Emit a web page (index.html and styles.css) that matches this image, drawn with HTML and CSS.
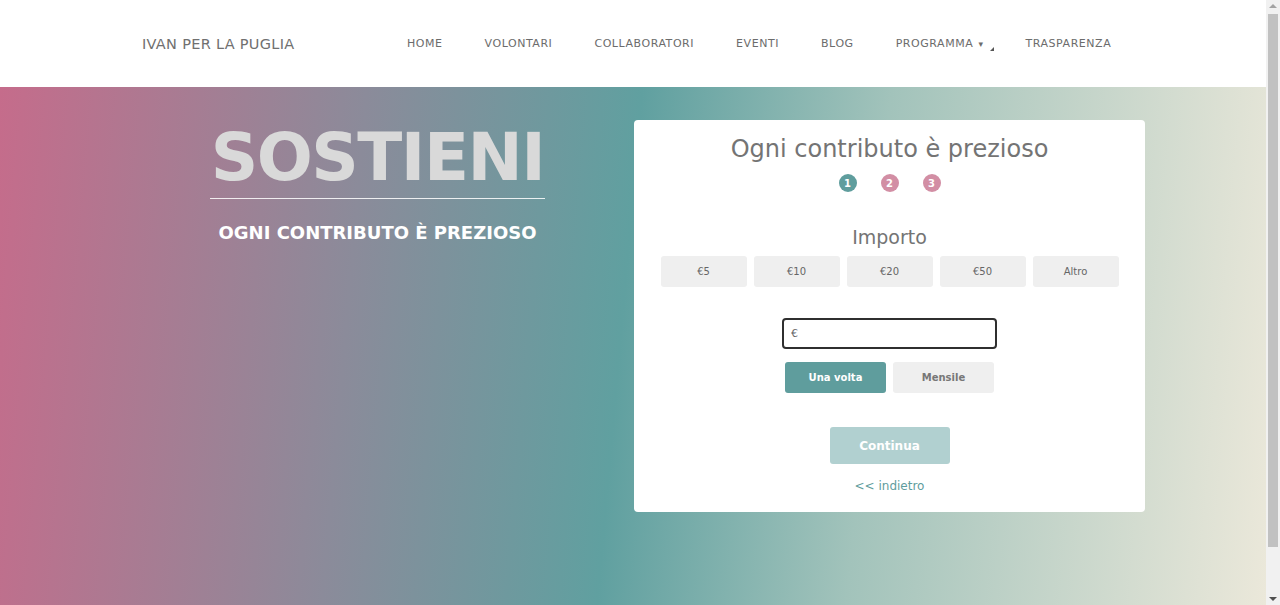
FILE: index.html
```html
<!DOCTYPE html>
<html lang="it">
<head>
  <meta charset="UTF-8" />
  <meta name="viewport" content="width=device-width, initial-scale=1.0"/>
  <title>Sostieni - Ivan per la Puglia</title>
  <link rel="stylesheet" href="styles.css">
</head>
<body>

  <div class="page">
    <!-- Top bar -->
    <header class="topbar">
      <div class="brand">IVAN PER LA PUGLIA</div>
      <nav class="menu">
        <a href="#">HOME</a>
        <a href="#">VOLONTARI</a>
        <a href="#">COLLABORATORI</a>
        <a href="#">EVENTI</a>
        <a href="#">BLOG</a>
        <a href="#" class="dropdown">PROGRAMMA <span class="caret">&#9662;</span><span class="corner"></span></a>
        <a href="#">TRASPARENZA</a>
      </nav>
    </header>

    <!-- Hero -->
    <section class="hero">
      <div class="intro">
        <h1>SOSTIENI</h1>
        <p class="tagline">OGNI CONTRIBUTO È PREZIOSO</p>
      </div>

      <div class="card">
        <h2>Ogni contributo è prezioso</h2>
        <div class="steps">
          <span class="step active">1</span>
          <span class="step">2</span>
          <span class="step">3</span>
        </div>

        <h3>Importo</h3>
        <div class="amounts">
          <button type="button">€5</button>
          <button type="button">€10</button>
          <button type="button">€20</button>
          <button type="button">€50</button>
          <button type="button">Altro</button>
        </div>

        <div class="custom">
          <input type="text" placeholder="€" />
        </div>

        <div class="frequency">
          <button type="button" class="selected">Una volta</button>
          <button type="button">Mensile</button>
        </div>

        <button type="button" class="next">Continua</button>
        <a href="#" class="back">&lt;&lt; indietro</a>
      </div>
    </section>
  </div>

  <!-- Scrollbar -->
  <div class="scrollbar">
    <span class="arrow up"></span>
    <span class="thumb"></span>
    <span class="arrow down"></span>
  </div>

</body>
</html>
```

FILE: styles.css
```css
body {
  margin: 0;
  padding: 0;
  font-family: "DejaVu Sans", sans-serif;
  height: 605px;
  overflow: hidden;
  display: flex;
}

.page {
  flex: 1;
  display: flex;
  flex-direction: column;
}

.topbar {
  height: 87px;
  background: #fff;
  display: flex;
  align-items: center;
  padding-left: 142px;
}

.brand {
  font-size: 14.5px;
  color: #707070;
  letter-spacing: 0.3px;
  width: 244px;
}

.menu {
  display: flex;
  align-items: center;
}

.menu a {
  font-size: 11px;
  color: #6c6c6c;
  letter-spacing: 0.55px;
  text-decoration: none;
  padding: 0 21px;
  position: relative;
}

.caret {
  font-size: 9px;
  margin-left: 1px;
}

.corner {
  position: absolute;
  right: 10px;
  top: 10px;
  width: 0;
  height: 0;
  border-left: 4px solid transparent;
  border-bottom: 4px solid #555;
}

.hero {
  flex: 1;
  background: linear-gradient(95deg, #c56c8b 0%, #8b8b9a 28%, #60a0a0 49%, #a2c3bb 68%, #ebe8da 100%);
  display: flex;
  align-items: flex-start;
  padding: 33px 0 0 210px;
  gap: 89px;
}

.intro {
  width: 335px;
  text-align: center;
}

.intro h1 {
  margin: 3px 0 0;
  font-size: 66px;
  font-weight: bold;
  letter-spacing: -1.5px;
  color: #d9d9d9;
  line-height: 70px;
  padding-bottom: 5px;
  border-bottom: 1px solid rgba(255, 255, 255, 0.85);
}

.tagline {
  margin: 23px 0 0;
  font-size: 18px;
  color: #fff;
  font-weight: bold;
}

.card {
  width: 511px;
  height: 392px;
  background: #fff;
  border-radius: 4px;
  display: flex;
  flex-direction: column;
  align-items: center;
}

.card h2 {
  margin: 15px 0 0;
  font-size: 24px;
  font-weight: normal;
  color: #747474;
}

.steps {
  display: flex;
  gap: 24px;
  margin-top: 11px;
}

.step {
  width: 18px;
  height: 18px;
  border-radius: 50%;
  background: #d28ea4;
  color: #fff;
  font-size: 10px;
  font-weight: bold;
  display: flex;
  align-items: center;
  justify-content: center;
}

.step.active {
  background: #5f9d9d;
}

.card h3 {
  margin: 34px 0 0;
  font-size: 19px;
  font-weight: normal;
  color: #747474;
}

.amounts {
  display: flex;
  gap: 7px;
  margin-top: 8px;
}

button {
  font-family: "DejaVu Sans", sans-serif;
  border: none;
  border-radius: 3px;
  background: #efefef;
  color: #666;
  font-size: 10px;
  cursor: pointer;
}

.amounts button {
  width: 86px;
  height: 31px;
}

.custom {
  margin-top: 31px;
}

.custom input {
  width: 215px;
  height: 31px;
  box-sizing: border-box;
  border: 2px solid #2f2f2f;
  border-radius: 4px;
  padding: 0 7px;
  font-size: 11px;
  font-family: "DejaVu Sans", sans-serif;
  outline: none;
}

.custom input::placeholder {
  color: #666;
}

.frequency {
  display: flex;
  gap: 7px;
  margin-top: 13px;
}

.frequency button {
  width: 101px;
  height: 31px;
  font-weight: bold;
  color: #777;
}

.frequency button.selected {
  background: #5f9d9d;
  color: #fff;
}

.next {
  margin-top: 34px;
  width: 120px;
  height: 37px;
  background: #b1d0d0;
  color: #fff;
  font-size: 12px;
  font-weight: bold;
}

.back {
  margin-top: 15px;
  font-size: 12px;
  color: #5f9d9d;
  text-decoration: none;
}

.scrollbar {
  width: 14px;
  background: #f1f1f1;
  display: flex;
  flex-direction: column;
  align-items: center;
}

.thumb {
  width: 10px;
  flex: 0 0 533px;
  background: #c1c1c1;
  margin: 2px 0 auto;
}

.arrow {
  width: 0;
  height: 0;
  border-left: 4px solid transparent;
  border-right: 4px solid transparent;
  margin: 4px 0;
}

.arrow.up {
  border-bottom: 4px solid #a3a3a3;
}

.arrow.down {
  border-top: 4px solid #505050;
}
```
